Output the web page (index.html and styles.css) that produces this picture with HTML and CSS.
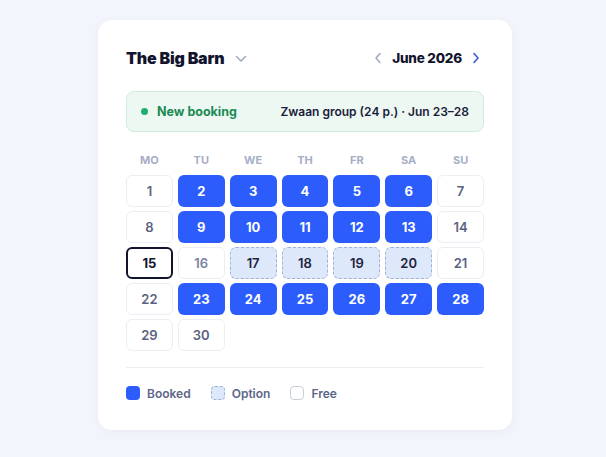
FILE: index.html
```html
<!DOCTYPE html>
<html>
<head>
<meta charset="utf-8">
<link rel="stylesheet" href="styles.css">
</head>
<body>
<div class="card">
  <div class="header">
    <div class="venue">
      <span class="title">The Big Barn</span>
      <svg class="caret" width="12" height="8" viewBox="0 0 12 8"><path d="M1.5 1.5 L6 6 L10.5 1.5" fill="none" stroke="#a3abc4" stroke-width="1.6" stroke-linecap="round" stroke-linejoin="round"/></svg>
    </div>
    <div class="month">
      <svg class="nav" width="8" height="12" viewBox="0 0 8 12"><path d="M6 1.5 L2 6 L6 10.5" fill="none" stroke="#a3abc4" stroke-width="1.6" stroke-linecap="round" stroke-linejoin="round"/></svg>
      <span class="month-label">June 2026</span>
      <svg class="nav" width="8" height="12" viewBox="0 0 8 12"><path d="M2 1.5 L6 6 L2 10.5" fill="none" stroke="#3a5bd9" stroke-width="1.6" stroke-linecap="round" stroke-linejoin="round"/></svg>
    </div>
  </div>
  <div class="banner">
    <div class="banner-left"><span class="dot"></span><span class="new">New booking</span></div>
    <div class="banner-right">Zwaan group (24 p.) · Jun 23–28</div>
  </div>
  <div class="weekdays">
    <span>MO</span><span>TU</span><span>WE</span><span>TH</span><span>FR</span><span>SA</span><span>SU</span>
  </div>
  <div class="grid">
    <div class="day free">1</div>
    <div class="day booked">2</div>
    <div class="day booked">3</div>
    <div class="day booked">4</div>
    <div class="day booked">5</div>
    <div class="day booked">6</div>
    <div class="day free">7</div>
    <div class="day free">8</div>
    <div class="day booked">9</div>
    <div class="day booked">10</div>
    <div class="day booked">11</div>
    <div class="day booked">12</div>
    <div class="day booked">13</div>
    <div class="day free">14</div>
    <div class="day today">15</div>
    <div class="day free light">16</div>
    <div class="day option">17</div>
    <div class="day option">18</div>
    <div class="day option">19</div>
    <div class="day option">20</div>
    <div class="day free">21</div>
    <div class="day free">22</div>
    <div class="day booked">23</div>
    <div class="day booked">24</div>
    <div class="day booked">25</div>
    <div class="day booked">26</div>
    <div class="day booked">27</div>
    <div class="day booked">28</div>
    <div class="day free">29</div>
    <div class="day free">30</div>
  </div>
  <div class="divider"></div>
  <div class="legend">
    <div class="legend-item"><span class="sw sw-booked"></span>Booked</div>
    <div class="legend-item"><span class="sw sw-option"></span>Option</div>
    <div class="legend-item"><span class="sw sw-free"></span>Free</div>
  </div>
</div>
</body>
</html>
```
FILE: styles.css
```css
* { box-sizing: border-box; }
html, body { margin: 0; padding: 0; }
body {
  background: #f3f5fc;
  font-family: Inter, "Noto Sans", sans-serif;
  width: 606px;
  height: 457px;
  padding-top: 20px;
  padding-left: 98px;
}
.card {
  width: 414px;
  height: 410px;
  background: #ffffff;
  border-radius: 14px;
  box-shadow: 0 2px 10px rgba(40, 50, 110, 0.05);
  padding: 26px 28px 0 28px;
}
.header {
  height: 24px;
  display: flex;
  align-items: center;
  justify-content: space-between;
}
.venue { display: flex; align-items: center; gap: 11px; }
.title {
  font-size: 16px;
  font-weight: 900;
  color: #12142e;
  letter-spacing: -0.2px;
}
.caret { margin-top: 2px; }
.month { display: flex; align-items: center; gap: 10px; padding-right: 4px; }
.month-label {
  font-size: 13.5px;
  font-weight: 800;
  color: #12142e;
  letter-spacing: -0.2px;
}
.banner {
  margin-top: 21px;
  height: 41px;
  border-radius: 8px;
  background: #edf8f2;
  border: 1px solid #cfecdc;
  display: flex;
  align-items: center;
  justify-content: space-between;
  padding: 0 14px 0 14px;
}
.banner-left { display: flex; align-items: center; gap: 9px; }
.dot { width: 7px; height: 7px; border-radius: 50%; background: #20ad6b; }
.new { font-size: 12.5px; font-weight: 700; color: #1b8a55; }
.banner-right { font-size: 12px; font-weight: 600; color: #1a1d3a; }
.weekdays {
  margin-top: 20px;
  display: grid;
  grid-template-columns: repeat(7, 1fr);
  column-gap: 5px;
  height: 16px;
  align-items: center;
  text-align: center;
  font-size: 11px;
  font-weight: 700;
  color: #a6aec6;
}
.grid {
  margin-top: 7px;
  display: grid;
  grid-template-columns: repeat(7, 1fr);
  grid-auto-rows: 32px;
  column-gap: 5px;
  row-gap: 4px;
}
.day {
  border-radius: 6px;
  display: flex;
  align-items: center;
  justify-content: center;
  font-size: 13px;
  font-weight: 700;
}
.free { background: #fff; border: 1px solid #eceef4; color: #5b6280; font-weight: 600; }
.free.light { color: #7b829c; }
.booked { background: #2c5cfb; color: #ffffff; }
.option { background: #dee8fb; border: 1px dashed #a0b1d6; color: #1d2340; font-weight: 600; }
.today { border: 2px solid #12142e; color: #12142e; background: #fff; }
.divider { margin-top: 16px; height: 1px; background: #eceef3; }
.legend {
  margin-top: 17px;
  display: flex;
  align-items: center;
  gap: 20px;
  height: 16px;
}
.legend-item {
  display: flex;
  align-items: center;
  gap: 7px;
  font-size: 12px;
  font-weight: 600;
  color: #5d6688;
}
.sw { width: 14px; height: 14px; border-radius: 4px; display: inline-block; }
.sw-booked { background: #2c5cfb; }
.sw-option { background: #dee8fb; border: 1px dashed #a0b1d6; }
.sw-free { background: #fff; border: 1px solid #c9cedb; }
```
